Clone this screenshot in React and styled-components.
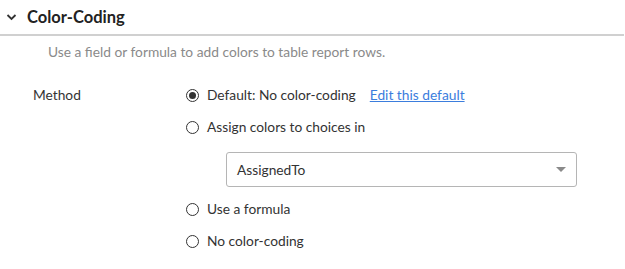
import React from 'react';
import styled, { createGlobalStyle } from 'styled-components';

const GlobalStyle = createGlobalStyle`
  body {
    margin: 0;
    background: #fff;
    font-family: Lato, 'Liberation Sans', sans-serif;
    color: #333;
  }
`;

const Section = styled.section`
  width: 625px;
`;

const Header = styled.div`
  display: flex;
  align-items: center;
  gap: 10px;
  height: 34px;
  padding-left: 6px;
  border-bottom: 2px solid #d0d0d0;
  margin-right: 1px;
`;

const Title = styled.h2`
  margin: 0;
  font-size: 16.5px;
  font-weight: 700;
  color: #222;
`;

const Description = styled.p`
  margin: 7px 0 0 48px;
  font-size: 13.75px;
  color: #8a8a8a;
`;

const FieldRow = styled.div`
  display: grid;
  grid-template-columns: 186px 1fr;
  margin-top: 26px;
`;

const Label = styled.div`
  padding-left: 33px;
  font-size: 13.75px;
  line-height: 18px;
  color: #333;
`;

const Options = styled.div`
  display: flex;
  flex-direction: column;
  gap: 14px;
`;

const Option = styled.label`
  display: flex;
  align-items: center;
  gap: 8px;
  font-size: 13.75px;
  line-height: 18px;
  color: #333;
`;

const Radio = styled.span`
  box-sizing: border-box;
  width: 13px;
  height: 13px;
  border-radius: 50%;
  border: 1px solid #333;
  display: flex;
  align-items: center;
  justify-content: center;
  flex-shrink: 0;
  &::after {
    content: '';
    width: 7px;
    height: 7px;
    border-radius: 50%;
    background: ${(p) => (p.$checked ? '#333' : 'transparent')};
  }
`;

const EditLink = styled.a`
  margin-left: 6px;
  color: #3b7ddd;
  text-decoration: underline;
  cursor: pointer;
`;

const Select = styled.div`
  box-sizing: border-box;
  display: flex;
  align-items: center;
  justify-content: space-between;
  width: 351px;
  height: 35px;
  margin: 2px 0 -1px 40px;
  padding: 0 10px 0 10px;
  border: 1px solid #b5b5b5;
  border-radius: 3px;
  font-size: 13.75px;
  color: #333;
`;

const Caret = styled.span`
  width: 0;
  height: 0;
  border-left: 5px solid transparent;
  border-right: 5px solid transparent;
  border-top: 5px solid #8a8a8a;
`;

const Chevron = () => (
  <svg width="11" height="8" viewBox="0 0 11 8">
    <path d="M1.5 2 L5.5 6 L9.5 2" fill="none" stroke="#333" strokeWidth="1.8" />
  </svg>
);

export default function App() {
  return (
    <>
      <GlobalStyle />
      <Section>
        <Header>
          <Chevron />
          <Title>Color-Coding</Title>
        </Header>
        <Description>Use a field or formula to add colors to table report rows.</Description>
        <FieldRow>
          <Label>Method</Label>
          <Options>
            <Option>
              <Radio $checked />
              Default: No color-coding
              <EditLink>Edit this default</EditLink>
            </Option>
            <Option>
              <Radio />
              Assign colors to choices in
            </Option>
            <Select>
              AssignedTo
              <Caret />
            </Select>
            <Option>
              <Radio />
              Use a formula
            </Option>
            <Option>
              <Radio />
              No color-coding
            </Option>
          </Options>
        </FieldRow>
      </Section>
    </>
  );
}
